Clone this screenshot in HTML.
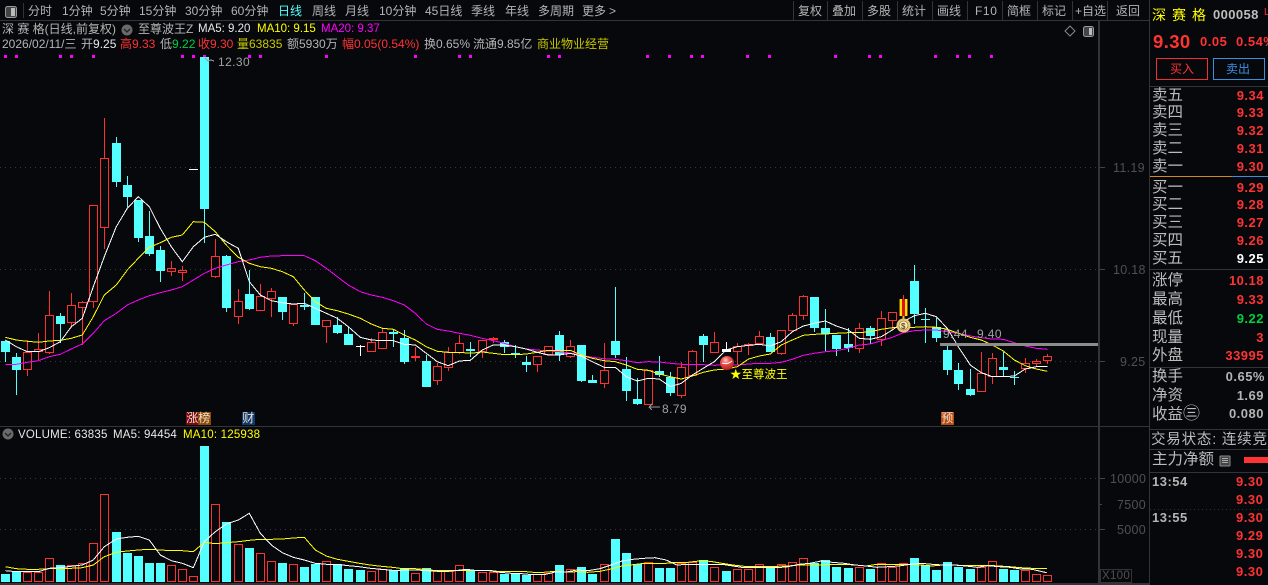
<!DOCTYPE html>
<html lang="zh"><head><meta charset="utf-8"><title>深赛格</title>
<style>
html,body{margin:0;padding:0;background:#07080b;width:1268px;height:585px;overflow:hidden}
body{position:relative;font-family:"Liberation Sans","WenQuanYi Zen Hei","Noto Sans CJK SC",sans-serif;font-size:12px;color:#b4b4b4}
svg{position:absolute;left:0;top:0}
.t{position:absolute;line-height:16px;height:16px;white-space:nowrap}
.b{font-weight:bold;letter-spacing:.5px;font-size:13px}
.l{font-size:15.5px;left:1152px;color:#bcbcbc}
.r{color:#ff3333}.y{color:#ffff00}.m{color:#ff00ff}.w{color:#e8e8e8}.g{color:#00d040}.o{color:#c8c800}.ax{color:#505050;font-size:12.5px;letter-spacing:.3px}.lb{color:#a0a0a0;letter-spacing:.4px}
.tag{position:absolute;top:412px;height:13px;width:12.5px;line-height:13px;text-align:center;color:#f0e0d0;font-size:12px}
</style></head><body>
<svg id="s" width="1268" height="585" viewBox="0 0 1268 585" shape-rendering="crispEdges"></svg>

<span class="t" style="left:28px;top:3px">分时</span><span class="t" style="left:62px;top:3px">1分钟</span><span class="t" style="left:100px;top:3px">5分钟</span><span class="t" style="left:139px;top:3px">15分钟</span><span class="t" style="left:185px;top:3px">30分钟</span><span class="t" style="left:231px;top:3px">60分钟</span><span class="t" style="left:278px;top:3px;color:#54ffff">日线</span><span class="t" style="left:312px;top:3px">周线</span><span class="t" style="left:345px;top:3px">月线</span><span class="t" style="left:379px;top:3px">10分钟</span><span class="t" style="left:425px;top:3px">45日线</span><span class="t" style="left:471px;top:3px">季线</span><span class="t" style="left:505px;top:3px">年线</span><span class="t" style="left:538px;top:3px">多周期</span><span class="t" style="left:582px;top:3px">更多</span><span class="t" style="left:609px;top:3px">&gt;</span>
<span class="t" style="left:798px;top:3px">复权</span><span class="t" style="left:832px;top:3px">叠加</span><span class="t" style="left:867px;top:3px">多股</span><span class="t" style="left:902px;top:3px">统计</span><span class="t" style="left:937px;top:3px">画线</span><span class="t" style="left:975px;top:3px;letter-spacing:.6px">F10</span><span class="t" style="left:1007px;top:3px">简框</span><span class="t" style="left:1042px;top:3px">标记</span><span class="t" style="left:1075px;top:3px">+自选</span><span class="t" style="left:1116px;top:3px">返回</span>

<span class="t" style="left:2px;top:21px">深 赛 格(日线,前复权)</span><span class="t" style="left:138px;top:21px">至尊波王Z</span><span class="t w" style="left:198px;top:21px;font-size:11.5px">MA5: 9.20</span><span class="t y" style="left:257px;top:21px;font-size:11.5px">MA10: 9.15</span><span class="t m" style="left:321px;top:21px;font-size:11.5px">MA20: 9.37</span>

<span class="t" style="left:2px;top:36px">2026/02/11/三</span><span class="t" style="left:81px;top:36px">开<span class="w">9.25</span></span><span class="t r" style="left:120px;top:36px">高9.33</span><span class="t" style="left:160px;top:36px">低<span class="g">9.22</span></span><span class="t r" style="left:198px;top:36px">收9.30</span><span class="t o" style="left:237px;top:36px">量63835</span><span class="t" style="left:287px;top:36px">额5930万</span><span class="t r" style="left:342px;top:36px">幅0.05(0.54%)</span><span class="t" style="left:424px;top:36px">换0.65%</span><span class="t" style="left:473px;top:36px">流通9.85亿</span><span class="t o" style="left:537px;top:36px">商业物业经营</span>

<span class="t lb" style="left:218px;top:54px">12.30</span>
<span class="t lb" style="left:662px;top:401px">8.79</span>
<span class="t lb" style="left:943px;top:326px">9.44</span><span class="t lb" style="left:977px;top:326px">9.40</span>
<span class="t y" style="left:730px;top:367px;font-size:11.5px">★至尊波王</span>
<span class="tag" style="left:186px;background:#7a0a10">涨</span><span class="tag" style="left:198px;background:#8a4a08">榜</span><span class="tag" style="left:242px;background:#0c3a6c">财</span><span class="tag" style="left:941px;background:#b84a10">预</span>

<span class="t w" style="left:18px;top:427px;font-size:11.5px;letter-spacing:.2px">VOLUME: 63835</span><span class="t w" style="left:113px;top:427px;font-size:11.5px;letter-spacing:.2px">MA5: 94454</span><span class="t y" style="left:183px;top:427px;font-size:11.5px;letter-spacing:.2px">MA10: 125938</span>

<span class="t ax" style="left:1113px;top:160px">11.19</span><span class="t ax" style="left:1113px;top:262px">10.18</span><span class="t ax" style="left:1120px;top:354px">9.25</span>
<span class="t ax" style="left:1110px;top:471px">10000</span><span class="t ax" style="left:1117px;top:497px">7500</span><span class="t ax" style="left:1117px;top:522px">5000</span><span class="t ax" style="left:1102px;top:568px;font-size:11.5px">X100</span>

<span class="t y" style="left:1152px;top:7px;font-size:14px;letter-spacing:6px">深赛格</span>
<span class="t b" style="left:1213px;top:7px;color:#bdbdbd;letter-spacing:.4px">000058</span><span class="t r" style="left:1264px;top:5px;font-size:10px">L</span>
<span class="t r" style="left:1153px;top:33px;font-size:18.5px;font-weight:bold;line-height:18px;letter-spacing:.4px">9.30</span>
<span class="t b r" style="left:1200px;top:34px">0.05</span><span class="t b r" style="left:1236px;top:34px">0.54%</span>
<span class="t r" style="left:1170px;top:61px">买入</span><span class="t" style="left:1226px;top:61px;color:#3a8ee0">卖出</span>

<span class="t l" style="top:88px">卖五</span><span class="t b r" style="right:4px;top:88px">9.34</span>
<span class="t l" style="top:105px">卖四</span><span class="t b r" style="right:4px;top:105px">9.33</span>
<span class="t l" style="top:123px">卖三</span><span class="t b r" style="right:4px;top:123px">9.32</span>
<span class="t l" style="top:141px">卖二</span><span class="t b r" style="right:4px;top:141px">9.31</span>
<span class="t l" style="top:159px">卖一</span><span class="t b r" style="right:4px;top:159px">9.30</span>
<span class="t l" style="top:180px">买一</span><span class="t b r" style="right:4px;top:180px">9.29</span>
<span class="t l" style="top:197px">买二</span><span class="t b r" style="right:4px;top:197px">9.28</span>
<span class="t l" style="top:215px">买三</span><span class="t b r" style="right:4px;top:215px">9.27</span>
<span class="t l" style="top:233px">买四</span><span class="t b r" style="right:4px;top:233px">9.26</span>
<span class="t l" style="top:251px">买五</span><span class="t b" style="right:4px;top:251px;color:#fff">9.25</span>
<span class="t l" style="top:273px">涨停</span><span class="t b r" style="right:4px;top:273px">10.18</span>
<span class="t l" style="top:292px">最高</span><span class="t b r" style="right:4px;top:292px">9.33</span>
<span class="t l" style="top:311px">最低</span><span class="t b g" style="right:4px;top:311px">9.22</span>
<span class="t l" style="top:330px">现量</span><span class="t b r" style="right:4px;top:330px">3</span>
<span class="t l" style="top:348px">外盘</span><span class="t b r" style="right:4px;top:348px">33995</span>
<span class="t l" style="top:369px">换手</span><span class="t b" style="right:3px;top:369px">0.65%</span>
<span class="t l" style="top:388px">净资</span><span class="t b" style="right:4px;top:388px">1.69</span>
<span class="t l" style="top:406px">收益<span style="font-size:17px">㊂</span></span><span class="t b" style="right:4px;top:406px">0.080</span>
<span class="t l" style="top:432px;left:1151px;font-size:14.5px;letter-spacing:.8px">交易状态: 连续竞</span>
<span class="t l" style="top:452px">主力净额</span>
<span class="t b" style="left:1152px;top:474px">13:54</span><span class="t b r" style="left:1236px;top:474px">9.30</span>
<span class="t b r" style="left:1236px;top:492px">9.30</span>
<span class="t b" style="left:1152px;top:510px">13:55</span><span class="t b r" style="left:1236px;top:510px">9.30</span>
<span class="t b r" style="left:1236px;top:528px">9.29</span>
<span class="t b r" style="left:1236px;top:546px">9.30</span>
<span class="t b r" style="left:1236px;top:564px">9.30</span>

<script>
var C=[[0,341,341,352,362],[0,353,357,370,395],[1,340,352,370,376],[1,333,349,352,360],[1,291,315,353,354],[0,313,316,324,343],[1,293,305,323,328],[1,301,302,308,345],[1,205,205,302,308],[1,118,158,228,249],
[0,137,143,182,187],[0,176,185,197,207],[0,200,200,238,242],[0,211,236,254,256],[0,246,250,271,282],[1,261,268,272,276],[1,266,270,273,281],[2,169,169,170,170],[0,57,57,209,243],[1,239,256,277,278],
[0,255,256,308,312],[1,289,301,317,324],[0,270,294,309,310],[1,284,296,311,311],[1,288,291,299,317],[0,297,297,312,320],[1,304,304,324,326],[0,293,305,307,310],[0,297,297,325,325],[1,320,320,327,343],
[0,317,325,333,334],[0,327,334,345,345],[2,345,346,347,356],[1,338,342,352,352],[1,329,332,349,349],[0,329,332,334,347],[0,330,338,362,364],[1,347,356,357,361],[0,355,361,387,387],[1,363,366,381,385],
[1,347,352,368,371],[1,335,343,353,354],[0,342,349,351,357],[1,340,340,352,358],[1,337,338,340,343],[0,340,342,347,353],[0,345,353,354,358],[0,356,362,365,372],[1,356,356,365,372],[1,346,346,355,355],
[0,331,335,355,361],[1,340,346,357,358],[0,345,345,381,382],[0,375,380,383,383],[1,343,370,384,388],[0,287,341,355,358],[0,357,369,391,401],[0,378,399,404,405],[1,370,370,405,405],[0,356,371,375,377],
[0,372,377,393,396],[1,362,367,396,398],[1,350,351,376,376],[0,334,336,345,362],[1,332,342,353,353],[2,342,349,352,352],[1,343,346,352,365],[1,343,344,346,355],[1,331,336,344,344],[0,333,337,352,352],
[1,330,330,354,355],[1,313,315,331,331],[1,295,296,316,320],[0,297,297,328,332],[0,309,328,334,352],[0,335,335,349,356],[0,328,344,348,352],[1,323,328,349,353],[0,326,328,336,344],[1,311,318,340,346],
[1,312,312,321,330],[1,295,299,316,320],[0,265,281,314,324],[0,308,319,320,343],[0,318,327,338,342],[0,346,350,370,375],[0,363,370,384,390],[0,369,389,395,396],[1,352,373,392,392],[1,353,358,377,384],
[0,352,367,370,376],[0,371,377,378,385],[1,358,363,369,373],[1,359,361,364,366],[1,354,356,361,364]];
var V=[447,437,440,442,400,420,421,415,355,208,321,384,393,414,414,421,433,454,63,238,291,358,369,385,409,414,418,426,417,409,417,432,435,439,432,435,432,445,430,439,439,421,436,442,442,447,447,450,448,445,420,433,426,447,418,342,384,418,412,429,429,414,412,405,427,438,432,432,418,430,418,412,400,415,405,426,429,427,432,415,427,415,399,420,435,411,426,432,427,409,432,435,436,448,451];
function Z(ox,oy,a){var s=[];for(var i=0;i<a.length;i+=2)s.push((ox+a[i]/3).toFixed(1)+','+(oy+a[i+1]/3).toFixed(1));return s}
var W=[].concat(Z(0,50,[16,870,49,890,82,905,115,905,148,893,181,875,214,830,247,805,280,710,313,620,349,530,382,475,415,440,448,470,481,535,514,590,547,635,580,590,613,562,646,553,679,575,715,595,748,695,781,735,814,752,847,758,880,762,913,760,946,775,979,790,1012,805,1045,830]),
Z(340,250,[61,262,94,270,127,272,160,272,193,283,226,285,259,310,292,335,325,347,358,333,391,331,427,300,460,285,493,285,526,290,559,297,592,307,625,315,658,315,691,310,724,318,757,335,793,352,826,352,859,380,892,393,925,385,958,387,991,410,1024,400,1057,375,1090,355,1123,335]),
Z(700,250,[79,300,112,290,146,286,178,283,211,288,244,275,277,245,310,228,343,220,376,213,409,228,445,240,478,265,511,268,544,260,577,240,610,215,643,197,676,190,709,200,742,235,775,290,811,345,844,368,877,380,910,380,943,378,976,357,1009,350,1042,350]));
var Y=[].concat(Z(0,50,[16,862,49,870,82,874,115,877,148,873,181,871,214,865,247,855,280,800,313,735,349,705,382,660,415,625,448,592,481,578,514,562,547,555,580,515,613,517,646,545,679,585,715,622,748,640,781,650,814,655,847,665,880,680,913,720,946,755,979,775,1012,782,1045,792]),
Z(340,250,[61,205,94,222,127,235,160,238,193,255,226,270,259,290,292,304,325,307,358,307,391,310,427,306,460,310,493,314,526,314,559,312,592,307,625,301,658,301,691,301,724,315,757,325,793,332,826,335,859,345,892,358,925,361,958,372,991,380,1024,387,1057,378,1090,367,1123,360]),
Z(700,250,[79,357,112,350,146,327,178,318,211,312,244,285,277,270,310,256,343,253,376,252,409,250,445,248,478,248,511,245,544,238,577,233,610,232,643,232,676,230,709,232,742,238,775,250,811,262,844,270,877,285,910,303,943,330,976,347,1009,357,1042,364]));
var M=[].concat(Z(0,50,[16,943,49,943,82,937,115,932,148,920,181,913,214,897,247,882,280,850,313,812,349,790,382,765,415,750,448,737,481,728,514,720,547,710,580,690,613,670,646,655,679,645,715,635,748,630,781,622,814,618,847,617,880,617,913,617,946,632,979,655,1012,680,1045,705]),
Z(340,250,[61,125,94,135,127,142,160,152,193,165,226,190,259,222,292,238,325,243,358,250,391,256,427,265,460,272,493,280,526,290,559,297,592,300,625,303,658,305,691,309,724,316,757,322,793,326,826,328,859,332,892,338,925,335,958,336,991,340,1024,343,1057,343,1090,344,1123,346]),
Z(700,250,[79,345,112,345,146,342,178,340,211,340,244,337,277,328,310,316,343,310,376,305,409,302,445,295,478,285,511,282,544,272,577,262,610,248,643,242,676,240,709,240,742,245,775,250,811,258,844,263,877,267,910,268,943,278,976,288,1009,295,1042,298]));
var VW=[].concat(Z(0,425,[16,437,49,440,82,440,115,440,148,430,181,428,214,424,247,420,280,405,313,365,349,342,382,337,415,334,448,345,481,390,514,407,547,415,580,428,613,350,646,320,679,297,715,285,748,265,781,325,814,360,847,383,880,397,913,405,946,415,979,418,1012,418,1045,422,1078,425,1111,430,1144,433,1177,436]),
Z(400,425,[0,436,33,435,66,436,99,438,132,440,165,437,198,433,234,437,267,437,300,442,333,445,366,446,399,449,432,449,465,441,498,441,531,435,564,437,600,431,633,420,666,408,699,403,732,400,765,398,798,405,831,420,864,418,897,418,930,418,966,418,999,423,1032,428,1065,428,1098,428,1131,428,1164,425,1197,418]),
Z(800,425,[30,415,63,408,96,412,132,415,165,420,198,423,231,427,264,425,297,423,330,418,363,415,396,418,429,420,462,420,498,423,531,427,564,422,597,425,630,427,663,432,696,433,740,443]));
var VY=[].concat(Z(0,425,[16,425,49,431,82,433,115,433,148,431,181,430,214,430,247,428,280,420,313,395,349,382,382,378,415,375,448,373,481,375,514,377,547,377,580,380,613,352,646,356,679,353,715,350,748,346,781,343,814,343,847,342,880,339,913,337,946,375,979,393,1012,403,1045,409,1078,415,1111,420,1144,424,1177,427]),
Z(400,425,[0,430,33,430,66,433,99,436,132,436,165,437,198,436,234,436,267,436,300,440,333,439,366,439,399,442,432,442,465,439,498,441,531,440,564,442,600,439,633,432,666,423,699,419,732,415,765,415,798,415,831,412,864,412,897,408,930,409,966,415,999,420,1032,424,1065,424,1098,424,1131,424,1164,423,1197,420]),
Z(800,425,[30,420,63,420,96,418,132,418,165,420,198,423,231,418,264,418,297,418,330,418,363,420,396,423,429,420,462,420,498,422,531,422,564,421,597,423,630,425,663,428,696,430,741,430]));
var CY='#54ffff',RD='#ff3030',h='';
function R(x,y,w,hh,c){return '<rect x="'+x+'" y="'+y+'" width="'+w+'" height="'+hh+'" fill="'+c+'"/>'}
function L(x1,y1,x2,y2,c,d){return '<line x1="'+x1+'" y1="'+y1+'" x2="'+x2+'" y2="'+y2+'" stroke="'+c+'" stroke-width="1"'+(d?' stroke-dasharray="'+d+'"':'')+'/>'}
function P(p,c){return '<polyline fill="none" stroke="'+c+'" stroke-width="1" points="'+p.join(' ')+'"/>'}
function OB(x,y,w,hh,c){return R(x,y,w,1,c)+R(x,y+hh-1,w,1,c)+R(x,y,1,hh,c)+R(x+w-1,y,1,hh,c)}
/* frame */
var F='#333338';
h+=R(0,20,1149,1,F)+R(23,3,1,15,F);
[793,827,862,897,932,967,1002,1037,1072,1107].forEach(function(x){h+=R(x,1,1,19,F)});
h+=R(1098,21,2,563,F)+R(0,426,1149,1,F)+R(0,583,1149,2,F)+R(1149,0,1,585,F);
[86,269,367,429,449,472].forEach(function(y){h+=R(1150,y,118,1,F)});
h+=R(1150,176,82,1,'#d08a20')+R(1232,176,36,1,'#3a8ee0');
h+=L(1150,509.5,1268,509.5,'#333','1 3');
/* grid */
[167.5,269.5,361.5,478.5,529.5].forEach(function(y){h+=L(0,y,1098,y,'#38383c','1 4');h+=R(1100,Math.floor(y),5,1,'#444')});
h+=R(1100,504,2,1,'#444');
/* marks */
[4,15,59,70,92,181,192,203,248,259,325,414,458,469,547,558,646,668,690,701,746,768,834,868,879,934,956,968,990].forEach(function(x){h+=R(x,55,3,3,'#ff00ff')});
/* candles & vols */
C.forEach(function(c,i){
 var x=1+11*i+Math.floor((i+1)/11),t=c[0],col=t==0?CY:t==1?RD:'#fff',wx=x+4;
 if(c[1]<c[2])h+=R(wx,c[1],1,c[2]-c[1],t==2?'#fff':col);
 if(c[4]>c[3])h+=R(wx,c[3],1,c[4]-c[3],t==2?'#fff':col);
 var bh=Math.max(c[3]-c[2],1);
 if(t==1)h+=OB(x,c[2],9,Math.max(bh,2),RD);else h+=R(x,c[2],9,bh,col);
 var vt=Math.round(425+V[i]/3),vc=t==2?(i==17?1:0):t;
 if(vc==1)h+=OB(x,vt,9,582-vt,RD);else h+=R(x,vt,9,582-vt,CY);
});
/* MA */
h+=P(M,'#ff00ff')+P(Y,'#ffff00')+P(W,'#ffffff')+P(VY,'#ffff00')+P(VW,'#ffffff');
/* gray bar */
h+=R(940,343,158,3,'#8c8c8c');
/* pointers */
h+='<g fill="none" stroke="#999" stroke-width="1"><path d="M205 58l3 3 3-1 3 1"/><path d="M660 407H649M649 407l3-3M649 407l3 3"/></g>';
/* top-left icon & right icons */
h+='<g shape-rendering="geometricPrecision"><rect x="5.5" y="6.5" width="11" height="11" rx="2" fill="#444" stroke="#999"/><rect x="11" y="8" width="4" height="8" fill="#bbb"/>'
 +'<rect x="1083.5" y="26.5" width="10" height="10" rx="2" fill="#444" stroke="#999"/><rect x="1089" y="28" width="3" height="7" fill="#bbb"/>'
 +'<path d="M1070 26l5 5-5 5-5-5z" fill="none" stroke="#888"/>'
 +'<circle cx="127" cy="30" r="5.5" fill="#6a6a6a"/><path d="M124 29l3 3 3-3" fill="none" stroke="#222" stroke-width="1.3"/>'
 +'<circle cx="8" cy="434" r="5.5" fill="#6a6a6a"/><path d="M5 433l3 3 3-3" fill="none" stroke="#222" stroke-width="1.3"/>'
 /* ball */
 +'<defs><radialGradient id="bl" cx=".4" cy=".3" r=".8"><stop offset="0" stop-color="#ffd0c8"/><stop offset=".35" stop-color="#f05050"/><stop offset="1" stop-color="#a01818"/></radialGradient></defs><circle cx="727" cy="363" r="7" fill="url(#bl)"/><path d="M722 363q5 2 10-2" stroke="#fff" stroke-width="1" fill="none"/>'
 /* medal */
 +'<circle cx="903.5" cy="325.5" r="7" fill="#e8c878"/><circle cx="903.5" cy="325.5" r="4.5" fill="#f4e8c0" stroke="#806020" stroke-width=".6"/><text x="901" y="329" font-size="8" font-weight="bold" fill="#705010" font-family="Liberation Sans">$</text><path d="M903.5 316v4" stroke="#e8c040" stroke-width="2"/></g>';
h+=R(899,299,9,17,'#ffe000')+R(902,299,3,17,'#e01010')+R(899,299,1,17,'#806000')+R(907,299,1,17,'#806000');
/* X100 box */
h+=OB(1100,569,32,14,F);
/* buttons */
h+=OB(1156,58,52,22,'#ee3030')+OB(1213,58,52,22,'#3a8ee0');
/* 主力净额 icon + bar */
h+='<rect x="1220" y="456" width="10" height="10" rx="1" fill="#444" stroke="#888"/>'+R(1222,458,6,1,'#aaa')+R(1222,460,6,1,'#aaa')+R(1222,462,6,1,'#aaa')+R(1244,457,24,6,'#ff3333');
document.getElementById('s').innerHTML=h;
</script>
</body></html>
